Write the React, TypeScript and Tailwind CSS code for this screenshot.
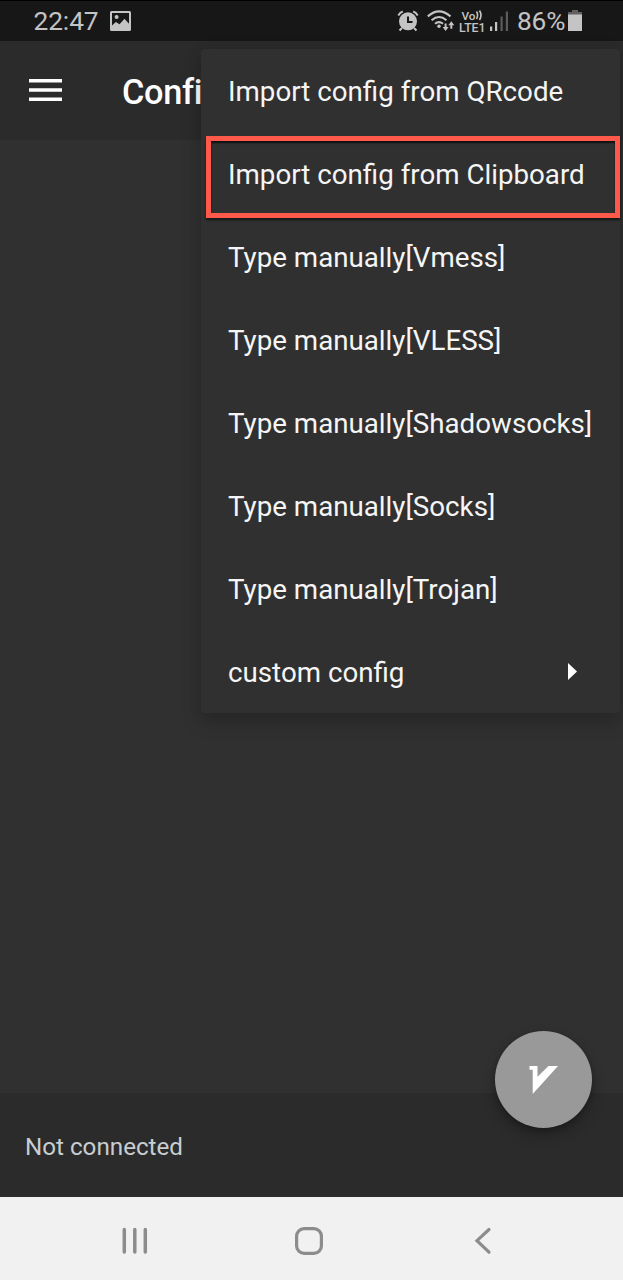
import React from 'react';

const menuItems = [
  'Import config from QRcode',
  'Import config from Clipboard',
  'Type manually[Vmess]',
  'Type manually[VLESS]',
  'Type manually[Shadowsocks]',
  'Type manually[Socks]',
  'Type manually[Trojan]',
  'custom config',
];

function PictureIcon() {
  return (
    <svg className="ml-[12px] h-[20px] w-[21px]" viewBox="0 0 21 20">
      <path
        fill="#c4c4c4"
        fillRule="evenodd"
        d="M1.5 0h18A1.5 1.5 0 0 1 21 1.500v17a1.500 1.500 0 0 1-1.500 1.500h-18A1.500 1.500 0 0 1 0 18.500v-17A1.500 1.500 0 0 1 1.500 0ZM2 2v12.500l3.800-3.500 3.700 2.200 5-5.400 4.500 5V2ZM6.600 4a2 2 0 1 1 0 4 2 2 0 0 1 0-4Z"
      />
    </svg>
  );
}

function AlarmIcon() {
  return (
    <svg className="h-[22px] w-[22px] shrink-0" viewBox="0 0 22 22" fill="none" stroke="#c4c4c4">
      <path d="M1.300 5.400A10 10 0 0 1 5.800 1.300M16.200 1.300a10 10 0 0 1 4.500 4.100" strokeWidth="2" />
      <path d="m5 18-2.500 2.500M17 18l2.500 2.500" strokeWidth="2" />
      <circle cx="11" cy="11.300" r="9" fill="#c4c4c4" stroke="none" />
      <path d="M11 6.500V12h4.500" stroke="#171717" strokeWidth="2" />
    </svg>
  );
}

function WifiIcon() {
  return (
    <svg className="ml-[8px] h-[22px] w-[28px] shrink-0" viewBox="0 0 28 22" fill="none" stroke="#c4c4c4" strokeWidth="2.100">
      <path d="M.8 6.400Q12 -3.600 23.500 6.400M4.600 10.200Q12 3.800 19.500 10.200M8 13.800q4-3.200 8 0" />
      <circle cx="12" cy="16.200" r="1.700" fill="#c4c4c4" stroke="none" />
      <path d="M18.600 13.500v5M24.300 18.800v-5" strokeWidth="2" />
      <path d="M15.600 17h6l-3 4ZM21.300 15.300h6l-3-4Z" fill="#c4c4c4" stroke="none" />
    </svg>
  );
}

function VolteLabel() {
  return (
    <svg className="ml-[4px] h-[24px] w-[28px] shrink-0 overflow-visible" viewBox="0 0 28 24">
      <g fill="#c4c4c4" className="font-['Roboto',sans-serif] font-medium">
        <text x="2.500" y="10.500" textLength="14" lengthAdjust="spacingAndGlyphs" className="text-[11.500px]">Vo</text>
        <text x="0" y="22.500" textLength="26.500" lengthAdjust="spacingAndGlyphs" className="text-[12.200px]">LTE1</text>
      </g>
      <path d="M17.500 2.500q2.200 3.500 0 7.500M20.500 1.500q3 4.700 0 9.500" fill="none" stroke="#c4c4c4" strokeWidth="1.600" />
    </svg>
  );
}

function SignalIcon() {
  return (
    <svg className="ml-[3px] h-[20px] w-[19px] shrink-0" viewBox="0 0 19 20">
      <path fill="#c4c4c4" d="M0 15.500h2.200V20H0ZM5 11h2.200v9H5Z" />
      <path fill="#5c5c5c" d="M10.500 5.500h2.200V20h-2.200ZM15.800 .5H18V20h-2.200Z" />
    </svg>
  );
}

function BatteryIcon() {
  return (
    <svg className="ml-[2px] h-[22px] w-[14px] shrink-0" viewBox="0 0 14 22">
      <path fill="#616161" d="M4 0h6v2h4v3H0V2h4Z" />
      <path fill="#c4c4c4" d="M0 4.500h14V21H0Z" />
    </svg>
  );
}

function StatusBar() {
  return (
    <div className="flex h-[41px] shrink-0 items-center border-t border-black bg-[#171717] pl-[33.500px] text-[26.300px] leading-none text-[#c4c4c4]">
      <span className="w-[64.500px] whitespace-nowrap tracking-[-0.100px]">22:47</span>
      <PictureIcon />
      <div className="ml-auto flex w-[226px] items-center">
        <AlarmIcon />
        <WifiIcon />
        <VolteLabel />
        <SignalIcon />
        <span className="ml-[8px] w-[49px] pt-px whitespace-nowrap tracking-[-0.200px]">86%</span>
        <BatteryIcon />
      </div>
    </div>
  );
}

function Menu() {
  return (
    <div className="absolute top-[49px] left-[201px] flex h-[664px] w-[419px] flex-col rounded-[4px] bg-[#303030] shadow-[0_10px_20px_rgba(0,0,0,0.160),0_0_14px_rgba(0,0,0,0.100)]">
      {menuItems.map((item) => (
        <div key={item} className="flex h-[83px] items-center justify-between pr-[43px] pb-px pl-[27px]">
          <span className="pt-[4px] text-[27.720px] whitespace-nowrap text-[#f5f5f5]">{item}</span>
          {item === 'custom config' && (
            <svg className="h-[17px] w-[9px]" viewBox="0 0 9 17">
              <path d="M0 0 9 8.500 0 17Z" fill="white" />
            </svg>
          )}
        </div>
      ))}
      <div className="absolute top-[87px] left-[5px] h-[82px] w-[414px] border-[5px] border-[#ff594b] shadow-[0_2px_2px_rgba(0,0,0,0.600),inset_0_2px_2px_rgba(0,0,0,0.700)]" />
    </div>
  );
}

export default function App() {
  return (
    <div className="relative flex h-[1280px] w-[623px] flex-col overflow-hidden bg-[#303030] font-['Roboto',sans-serif]">
      <StatusBar />
      <header className="flex h-[99px] shrink-0 items-center bg-[#2b2b2b] pl-[29px]">
        <svg className="h-[23px] w-[33px]" viewBox="0 0 33 23">
          <path d="M0 0h33v3.500H0ZM0 9.300h33v3.500H0ZM0 18.500h33V22H0Z" fill="white" />
        </svg>
        <h1 className="ml-[60px] pt-[3px] text-[34.300px] leading-[40px] font-medium tracking-[-0.350px] text-white">
          Confi
        </h1>
      </header>
      <main className="flex-1" />
      <footer className="flex h-[104px] shrink-0 items-center bg-[#2b2b2b] pb-px pl-[25px] text-[24.200px] text-[#c8cdcf]">
        <span className="pt-[5px]">Not connected</span>
      </footer>
      <nav className="flex h-[83px] shrink-0 items-center bg-[#f1f1f1] pt-[4px] pl-[121px]">
        <svg className="h-[28px] w-[28px]" viewBox="0 0 28 28" fill="none" stroke="#8c8c8c" strokeWidth="3.500" strokeLinecap="round">
          <path d="M3.300 2.500v22.500M13.800 2.500v22.500M24.300 2.500v22.500" />
        </svg>
        <svg className="ml-[146px] h-[28px] w-[28px]" viewBox="0 0 28 28" fill="none" stroke="#8c8c8c" strokeWidth="3.200">
          <rect x="1.600" y="1.600" width="24.800" height="24.800" rx="7.500" />
        </svg>
        <svg className="ml-[151px] h-[28px] w-[18px]" viewBox="0 0 18 28" fill="none" stroke="#8c8c8c" strokeWidth="3.200" strokeLinecap="round">
          <path d="M15 2.500 3 13.700l12 11.500" />
        </svg>
      </nav>
      <button
        aria-label="Connect"
        className="absolute top-[1031px] left-[495px] flex h-[97px] w-[97px] items-center justify-center rounded-full bg-[#999999] shadow-[0_7px_14px_rgba(0,0,0,0.250),0_2px_5px_rgba(0,0,0,0.200)]"
      >
        <svg className="h-[28px] w-[29px]" viewBox="0 0 29 28">
          <path d="M.5 0H8.500V10.800L19.500 0H29L3.700 28V3.800H.5Z" fill="white" />
        </svg>
      </button>
      <Menu />
    </div>
  );
}
